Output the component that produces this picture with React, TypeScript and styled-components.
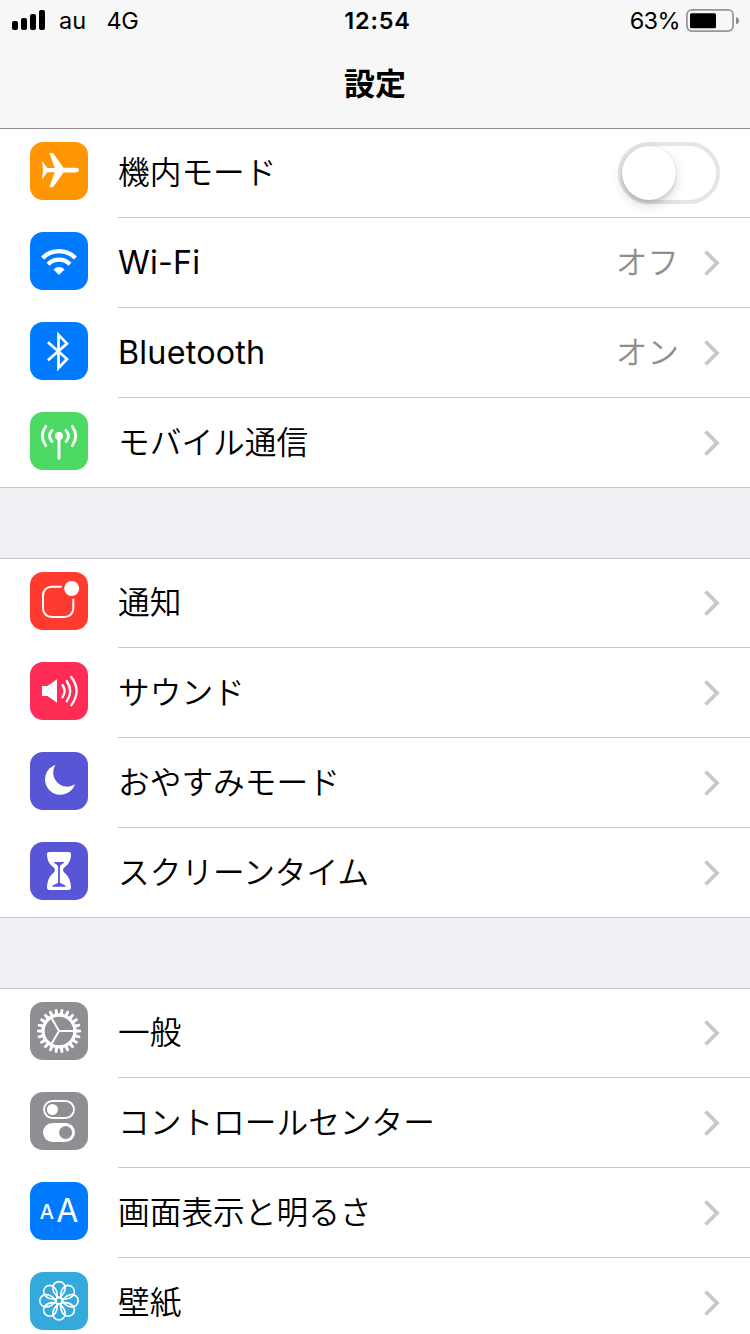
import React from "react";
import styled, { createGlobalStyle } from "styled-components";

const GlobalStyle = createGlobalStyle`
  * { box-sizing: border-box; }
  html, body { margin: 0; background: #efeff4; }
  body { overflow: hidden; font-family: "Inter", "Noto Sans CJK JP", sans-serif; color: #000; }
`;

const Screen = styled.div`
  width: 100%;
  height: 1334px;
  overflow: hidden;
  background: #efeff4;
`;

const Header = styled.header`
  height: 128px;
  background: #f7f7f7;
`;

const StatusBar = styled.div`
  display: grid;
  grid-template-columns: 1fr auto 1fr;
  align-items: center;
  height: 40px;
  padding: 0 11px 0 12px;
  font-size: 23.5px;
  line-height: 38px;
`;

const StatusLeft = styled.div`
  display: flex;
  align-items: center;
`;

const Signal = styled.svg`
  display: block;
  width: 34px;
  height: 22px;
  margin-right: 13px;
`;

const Carrier = styled.span`
  padding-top: 2px;
  margin-right: 20.5px;
`;

const Network = styled.span`
  padding-top: 2px;
  letter-spacing: -0.4px;
`;

const Clock = styled.time`
  padding: 2px 0 0 4px;
  font-weight: 600;
  letter-spacing: 0.8px;
`;

const StatusRight = styled.div`
  display: flex;
  align-items: center;
  justify-content: flex-end;
`;

const Percent = styled.span`
  padding-top: 2px;
  letter-spacing: -0.6px;
`;

const Battery = styled.svg`
  display: block;
  width: 54px;
  height: 24px;
  margin-left: 5px;
`;

const Title = styled.h1`
  margin: 0;
  height: 88px;
  line-height: 84px;
  text-align: center;
  font-family: "Noto Sans CJK JP", sans-serif;
  font-size: 31px;
  font-weight: 700;
`;

const Group = styled.section<{ $first?: boolean }>`
  margin-bottom: 70px;
  background: #fff;
  border-top: 1px solid ${(p) => (p.$first ? "#8e8e90" : "#c8c7cc")};
  border-bottom: 1px solid #c8c7cc;
`;

const Row = styled.div`
  display: flex;
  height: 90px;
  padding-left: 30px;

  &:first-child { margin-top: -1px; }
  &:last-child { margin-bottom: -1px; }
  &:last-child > :last-child { border-bottom-color: transparent; }
`;

const Tile = styled.svg<{ $color: string }>`
  display: block;
  flex: none;
  width: 58px;
  height: 58px;
  margin: 14px 30px 0 0;
  border-radius: 13px;
  background: ${(p) => p.$color};
`;

const RowBody = styled.div`
  flex: 1;
  display: flex;
  align-items: center;
  border-bottom: 1px solid #c8c7cc;
  padding-right: 30px;
`;

const Label = styled.span<{ $latin?: boolean }>`
  flex: 1;
  padding-bottom: ${(p) => (p.$latin ? 0 : 6)}px;
  font-family: ${(p) => (p.$latin ? '"Inter", sans-serif' : '"Noto Sans CJK JP", sans-serif')};
  font-size: ${(p) => (p.$latin ? 32.3 : 31.7)}px;
  font-weight: ${(p) => (p.$latin ? 400 : 350)};
  letter-spacing: ${(p) => (p.$latin ? 0.2 : 0)}px;
  line-height: 48px;
`;

const Value = styled.span`
  margin-right: 24px;
  padding-bottom: 6px;
  font-family: "Noto Sans CJK JP", sans-serif;
  font-size: 31.7px;
  font-weight: 350;
  line-height: 48px;
  color: #8e8e93;
`;

const ChevronIcon = styled.svg`
  display: block;
  width: 17px;
  height: 28px;
`;

const Switch = styled.button`
  width: 102px;
  height: 62px;
  padding: 0;
  border: 4px solid #e5e5e5;
  border-radius: 31px;
  background: #fff;
`;

const Knob = styled.span`
  display: block;
  width: 54px;
  height: 54px;
  border-radius: 50%;
  background: #fff;
  box-shadow: 0 5px 12px rgba(0, 0, 0, 0.16), 0 3px 3px rgba(0, 0, 0, 0.09), 0 0 1px rgba(0, 0, 0, 0.2);
`;

const Chevron = () => (
  <ChevronIcon viewBox="0 0 17 28" fill="none" stroke="#c7c7cc" strokeWidth="3.8">
    <path d="M2.500 2.500 14 14 2.500 25.500" />
  </ChevronIcon>
);

const line = { fill: "none", stroke: "#fff" };

const gearTeeth = Array.from({ length: 22 }, (_, i) => (i * 360) / 22);
const petals = Array.from({ length: 8 }, (_, i) => i * 45);

const icons: Record<string, React.ReactNode> = {
  plane: (
    <path
      fill="#fff"
      d="M12 19.7h.8l4.500 6.300h7.400L19.300 11H23l10.500 14.700 12.700.1c1.800.1 2.800 1.100 2.800 2.300s-1 2.200-2.800 2.300L33.500 30.500 23 45.200h-3.700l5.400-15h-7.400l-4.500 6.300H12l1-8.400z"
    />
  ),
  wifi: (
    <>
      <path {...line} strokeWidth="4.200" d="M12.600 25.900a23.300 23.300 0 0 1 32.800 0M18 32.300a15.300 15.300 0 0 1 22 0" />
      <path fill="#fff" d="M29 43l-5.500-5.600a7.700 7.700 0 0 1 11 0z" />
    </>
  ),
  bluetooth: <path {...line} strokeWidth="2.700" d="M18 20.200l19 16.800-8.500 9V12.800l8.500 8.800L18 38.300" />,
  cellular: (
    <>
      <circle cx="29" cy="24" r="4" fill="#fff" />
      <path {...line} strokeWidth="3" strokeLinecap="round" d="M29 24v22.300" />
      <path
        {...line}
        strokeWidth="2.800"
        strokeLinecap="round"
        d="M22 18.500q-5 5.500 0 11M36 18.500q5 5.500 0 11M15.800 14.300q-7 9.700 0 19.400M42.200 14.300q7 9.700 0 19.400"
      />
    </>
  ),
  notification: (
    <>
      <path {...line} strokeWidth="2" d="M31.700 14.700H21.500a8.500 8.500 0 0 0-8.500 8.500v13.300a8.500 8.500 0 0 0 8.500 8.500h13.300a8.500 8.500 0 0 0 8.500-8.500v-9.700" />
      <circle cx="41.700" cy="16.400" r="7.500" fill="#fff" />
    </>
  ),
  sound: (
    <>
      <path fill="#fff" d="M12 24h5.500L27 17.300v23.500L17.500 34H12z" />
      <path
        {...line}
        strokeWidth="2.300"
        strokeLinecap="round"
        d="M32.600 23q4 6 0 12.200M36.700 19q7 10 0 20.400M41.300 15q10.500 14 0 28.200"
      />
    </>
  ),
  moon: <path fill="#fff" d="M25.700 12.700A15.400 15.400 0 1 0 45 32.300 14 14 0 0 1 25.700 12.700z" />,
  hourglass: (
    <>
      <path
        fill="#fff"
        d="M19.500 10h19c1.800 0 2.700 1 2.500 2.500-.5 8.500-3.500 10-7 13.300-1.200 1.200-1.200 3.200 0 4.400 3.500 3.300 6.500 6 7 15.300.1 1.500-.7 2.500-2.500 2.500h-19c-1.800 0-2.600-1-2.500-2.500.5-9.300 3.500-12 7-15.300 1.200-1.200 1.200-3.200 0-4.400-3.500-3.300-6.500-4.800-7-13.300-.2-1.500.7-2.500 2.500-2.500z"
      />
      <path
        fill="#5856d6"
        d="M23.700 20h10.800c-1 1.800-4.600 2.600-4.600 5v15.500c.8 1.700 5.500 1.600 6 4.300H22.100c.5-2.700 5.200-2.600 6-4.300V25c0-2.400-3.500-3.200-4.400-5z"
      />
    </>
  ),
  gear: (
    <>
      <circle {...line} cx="29" cy="29" r="15.900" strokeWidth="3.200" />
      {gearTeeth.map((a) => (
        <path key={a} fill="#fff" transform={`rotate(${a} 29 29)`} d="M45.500 27.200l5.500.6v2.400l-5.500.6z" />
      ))}
      <path {...line} strokeWidth="2" d="M29 29h15M29 29l-7.500-13M29 29l-7.500 13" />
    </>
  ),
  controls: (
    <>
      <rect {...line} strokeWidth="1.900" x="14" y="9" width="30" height="17" rx="8.500" />
      <circle cx="22.400" cy="17.500" r="5.500" fill="#fff" />
      <rect fill="#fff" x="13" y="31" width="32" height="19" rx="9.500" />
      <circle cx="35.600" cy="40.500" r="6.500" fill="#8e8e93" />
    </>
  ),
  display: (
    <g fill="#fff" fontFamily="Inter, sans-serif">
      <text x="9.800" y="37" fontSize="20" fontWeight="500">A</text>
      <text x="26.300" y="40" fontSize="32" fontWeight="400">A</text>
    </g>
  ),
  wallpaper: (
    <g {...line} strokeWidth="1.600" transform="translate(29 28.800)">
      <circle r="3.200" />
      {petals.map((a) => (
        <path key={a} transform={`rotate(${a})`} d="M0-3.200C-3.500-5.500-6.200-9.500-6.200-13A6.100 6.100 0 0 1 6.200-13C6.200-9.500 3.500-5.500 0-3.200" />
      ))}
    </g>
  ),
};

type Item = {
  icon: string;
  color: string;
  label: string;
  latin?: boolean;
  value?: string;
  toggle?: boolean;
};

const groups: Item[][] = [
  [
    { icon: "plane", color: "#ff9500", label: "機内モード", toggle: true },
    { icon: "wifi", color: "#007aff", label: "Wi-Fi", latin: true, value: "オフ" },
    { icon: "bluetooth", color: "#007aff", label: "Bluetooth", latin: true, value: "オン" },
    { icon: "cellular", color: "#4cd964", label: "モバイル通信" },
  ],
  [
    { icon: "notification", color: "#ff3b30", label: "通知" },
    { icon: "sound", color: "#ff2d55", label: "サウンド" },
    { icon: "moon", color: "#5856d6", label: "おやすみモード" },
    { icon: "hourglass", color: "#5856d6", label: "スクリーンタイム" },
  ],
  [
    { icon: "gear", color: "#8e8e93", label: "一般" },
    { icon: "controls", color: "#8e8e93", label: "コントロールセンター" },
    { icon: "display", color: "#007aff", label: "画面表示と明るさ" },
    { icon: "wallpaper", color: "#34aadc", label: "壁紙" },
  ],
];

export default function App() {
  return (
    <Screen>
      <GlobalStyle />
      <Header>
        <StatusBar>
          <StatusLeft>
            <Signal viewBox="0 0 34 22">
              <rect x="0" y="12" width="6" height="9" rx="2" />
              <rect x="9" y="9" width="6" height="12" rx="2" />
              <rect x="18" y="5" width="6" height="16" rx="2" />
              <rect x="27" y="1" width="6" height="20" rx="2" />
            </Signal>
            <Carrier>au</Carrier>
            <Network>4G</Network>
          </StatusLeft>
          <Clock>12:54</Clock>
          <StatusRight>
            <Percent>63%</Percent>
            <Battery viewBox="0 0 54 24">
              <rect x="1.900" y="1.900" width="46.200" height="21.200" rx="5" fill="none" stroke="#979797" strokeWidth="1.800" />
              <rect x="5" y="5.200" width="26" height="15" rx="1.500" />
              <path d="M51 8.900c2 .8 3 2 3 3.800s-1 3-3 3.800z" fill="#8a8a8a" />
            </Battery>
          </StatusRight>
        </StatusBar>
        <Title>設定</Title>
      </Header>
      {groups.map((items, g) => (
        <Group key={g} $first={g === 0}>
          {items.map((item) => (
            <Row key={item.label}>
              <Tile $color={item.color} viewBox="0 0 58 58">
                {icons[item.icon]}
              </Tile>
              <RowBody>
                <Label $latin={item.latin}>{item.label}</Label>
                {item.value && <Value>{item.value}</Value>}
                {item.toggle ? (
                  <Switch type="button" role="switch" aria-checked={false}>
                    <Knob />
                  </Switch>
                ) : (
                  <Chevron />
                )}
              </RowBody>
            </Row>
          ))}
        </Group>
      ))}
    </Screen>
  );
}
